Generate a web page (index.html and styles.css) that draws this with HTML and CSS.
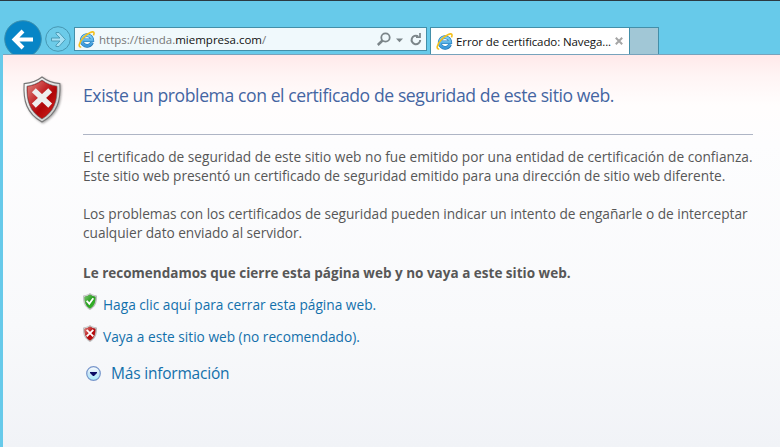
FILE: index.html
```html
<!DOCTYPE html>
<html lang="es">
<head>
<meta charset="utf-8">
<title>Error de certificado: Navegación bloqueada</title>
<link rel="stylesheet" href="styles.css">
</head>
<body>
<svg class="defs" aria-hidden="true">
  <defs>
    <linearGradient id="red" x1="0" y1="0" x2="1" y2="1"><stop offset="0" stop-color="#e08a84"/><stop offset=".4" stop-color="#c3282a"/><stop offset=".6" stop-color="#b00508"/><stop offset="1" stop-color="#d42a22"/></linearGradient>
    <linearGradient id="green" x1="0" y1="0" x2="1" y2="1"><stop offset="0" stop-color="#7cc46e"/><stop offset=".5" stop-color="#27a01f"/><stop offset="1" stop-color="#3fc22f"/></linearGradient>
    <linearGradient id="rim" x1="0" y1="0" x2="1" y2="1"><stop offset="0" stop-color="#fff"/><stop offset="1" stop-color="#c4c4c4"/></linearGradient>
    <linearGradient id="orb" x1="0" y1="0" x2="0" y2="1"><stop offset="0" stop-color="#fff"/><stop offset=".5" stop-color="#c9e6f7"/><stop offset="1" stop-color="#a9effc"/></linearGradient>
    <linearGradient id="blue" x1="0" y1="0" x2="0" y2="1"><stop offset="0" stop-color="#7fd0f4"/><stop offset="1" stop-color="#3b98da"/></linearGradient>
    <symbol id="ie" viewBox="0 0 17 17">
      <path d="M14 11.300A5.300 5.300 0 1 1 14.300 9.300H5" fill="none" stroke="#2379b8" stroke-width="3.600"/>
      <path d="M14 11.300A5.300 5.300 0 1 1 14.300 9.300H5" fill="none" stroke="url(#blue)" stroke-width="2.500"/>
      <path d="M3.200 16C-.2 16.500.8 11.500 5.500 6.500 10 1.600 15.600-.6 16 1.900c.1.800-.2 1.600-.6 2.400" fill="none" stroke="#f4c01c" stroke-width="1.600"/>
    </symbol>
    <symbol id="shield" viewBox="0 0 38 46">
      <path d="M19 1C14 5 8 7 1.500 7.500C.5 24 4 37 19 45 34 37 37.500 24 36.500 7.500 30 7 24 5 19 1Z" fill="url(#rim)" stroke="#777" stroke-width="1.100"/>
      <path d="M19 4C14.500 7.500 9.500 9.400 4.300 10 3.800 24 7 35 19 42 31 35 34.200 24 33.700 10 28.500 9.400 23.500 7.500 19 4Z" fill="currentColor" stroke="#666" stroke-width=".7"/>
    </symbol>
  </defs>
</svg>
<header class="chrome">
  <svg class="back" viewBox="0 0 38 38"><circle cx="19" cy="19" r="18.300" fill="#0785c6" stroke="#3b8fae"/><path d="M29 19.500H11.500M19 11 10.500 19.500l8.500 8.500" fill="none" stroke="#fff" stroke-width="4"/></svg>
  <svg class="forward" viewBox="0 0 26 26"><circle cx="13" cy="13" r="12.300" fill="#6ccbe9" stroke="#4797b2"/><path d="M6.500 12h8.500l-4-4V6.500h3l6.300 7-6.300 7h-3V19l4-4H6.500Z" fill="#a5e0f4" stroke="#4797b2" stroke-width=".9"/></svg>
  <div class="address">
    <svg class="ie"><use href="#ie"/></svg>
    <span class="url">https://tienda.<b>miempresa.com</b>/</span>
    <svg class="tools" viewBox="0 0 50 16" fill="none" stroke="#7b8589"><circle cx="13.500" cy="6.500" r="4.200" stroke-width="1.800"/><path d="M10.500 9.500 5.800 14" stroke-width="2.500"/><path d="M24 7.500h7l-3.500 3.700Z" fill="#7b8589" stroke="none"/><path d="M46 5.200A4.300 4.300 0 1 0 48.200 9" stroke-width="2"/><path d="M44 6.200h4V2" stroke-width="1.700"/></svg>
  </div>
  <div class="tab"><svg class="ie"><use href="#ie"/></svg><span class="title">Error de certificado: Navega...</span><svg class="close" viewBox="0 0 8 8"><path d="m.8.8 6.400 6.400M7.200.8.8 7.200" stroke="#a5a5a5" stroke-width="2"/></svg></div>
  <div class="newtab"></div>
</header>
<main class="page">
  <svg class="warning" viewBox="0 0 38 46" color="#b90c10"><use href="#shield"/><path d="M19 5C14.500 8.500 9.500 10 5 10.600 4.500 24 7.500 34.500 19 41 30.500 34.500 33.500 24 33 10.600 28.500 10 23.500 8.500 19 5Z" fill="url(#red)"/><path d="m11 14 16 15m0-15-16 15" stroke="#eee" stroke-width="5.500"/></svg>
  <div class="content">
    <h1>Existe un problema con el certificado de seguridad de este sitio web.</h1>
    <p><span>El certificado de seguridad de este sitio web no fue emitido por una entidad de certificación de confianza.</span><br><span class="tight">Este sitio web presentó un certificado de seguridad emitido para una dirección de sitio web diferente.</span></p>
    <p class="tight"><span>Los problemas con los certificados de seguridad pueden indicar un intento de engañarle o de interceptar</span><br><span>cualquier dato enviado al servidor.</span></p>
    <p class="advice"><span>Le recomendamos que cierre esta página web y no vaya a este sitio web.</span></p>
    <div class="option"><svg viewBox="0 0 38 46" color="#2ba322"><use href="#shield"/><path d="M19 5C14.500 8.500 9.500 10 5 10.600 4.500 24 7.500 34.500 19 41 30.500 34.500 33.500 24 33 10.600 28.500 10 23.500 8.500 19 5Z" fill="url(#green)"/><path d="m10 21 7 8 11-15" fill="none" stroke="#fff" stroke-width="5"/></svg><a>Haga clic aquí para cerrar esta página web.</a></div>
    <div class="option"><svg viewBox="0 0 38 46" color="#b90c10"><use href="#shield"/><path d="M19 5C14.500 8.500 9.500 10 5 10.600 4.500 24 7.500 34.500 19 41 30.500 34.500 33.500 24 33 10.600 28.500 10 23.500 8.500 19 5Z" fill="url(#red)"/><path d="m10 13 18 18m0-18-18 18" stroke="#fff" stroke-width="5"/></svg><a>Vaya a este sitio web (no recomendado).</a></div>
    <div class="more"><svg viewBox="0 0 15 15"><circle cx="7.500" cy="7.500" r="6.800" fill="url(#orb)" stroke="#7796cb" stroke-width="1.200"/><path d="M4 6h7v1L8 10H7L4 7Z" fill="#0a0a63"/></svg><a>Más información</a></div>
  </div>
</main>
</body>
</html>
```
FILE: styles.css
```css
* { box-sizing: border-box; }
body { margin: 0; width: 780px; height: 447px; overflow: hidden; background: #67caea; border-top: 1px solid #2b3a42; font-family: "Open Sans", "Noto Sans", sans-serif; font-size: 13.7px; color: #575757; display: flex; flex-direction: column; }
svg { display: block; flex: none; }
span, a, h1 { white-space: nowrap; }
.defs { position: absolute; width: 0; height: 0; }
.chrome { height: 53px; flex: none; display: flex; align-items: flex-start; padding-left: 4px; overflow: hidden; }
.back { width: 38px; height: 38px; margin-top: 19px; }
.forward { width: 26px; height: 26px; margin: 25px 0 0 3px; }
.address { width: 353px; height: 24px; margin: 26px 0 0 3px; border: 1px solid #438fa9; background: #f0f9fc; display: flex; align-items: center; padding: 0 4px 0 3px; }
.ie { width: 17px; height: 17px; }
.url { font-size: 11.5px; color: #777; margin-left: 4px; flex: 1; }
.url b { font-weight: 400; color: #111; }
.tools { width: 50px; height: 16px; }
.tab { width: 200px; height: 27px; margin: 26px 0 0 3px; border: 1px solid #438fa9; border-bottom: 0; background: #fff; display: flex; align-items: center; padding-left: 5px; }
.title { font-size: 11.5px; letter-spacing: -.1px; color: #111; margin-left: 3px; width: 158px; }
.close { width: 8px; height: 8px; margin-left: 1px; }
.newtab { width: 29px; height: 27px; margin-top: 26px; border: 1px solid #438fa9; border-width: 1px 1px 0 0; background: #a1c7d6; }
.page { flex: 1; margin-left: 3px; border-top: 1px solid #78a3bc; background: linear-gradient(#ffe9ea 0, #fff4f4 20px, #fffdfd 50px, #fdfdfe 90px, #f8f9fb 270px, #f1f3f7 392px); display: flex; align-items: flex-start; padding: 21px 0 0 19px; }
.warning { width: 40px; height: 47px; filter: drop-shadow(1px 1px 1px #0005); }
.content { margin-left: 21px; width: 670px; }
h1 { margin: 0 0 12px; height: 59px; border-bottom: 1px solid #aeb5c5; font-size: 17.6px; letter-spacing: -.42px; font-weight: 400; line-height: 38px; color: #4465a2; }
p { margin: 0 0 19px; line-height: 19px; }
.tight { letter-spacing: -.035px; }
.advice { font-size: 13.53px; font-weight: 700; margin: 22px 0 10px; }
.option { display: flex; height: 32px; line-height: 24px; color: #1370ab; }
.option svg { width: 14px; height: 17px; margin-right: 6px; }
.more { display: flex; align-items: center; color: #1370ab; font-size: 15.5px; letter-spacing: -.2px; line-height: 22px; padding: 5px 0 0 3px; }
.more svg { width: 15px; height: 15px; margin-right: 10px; }
```
